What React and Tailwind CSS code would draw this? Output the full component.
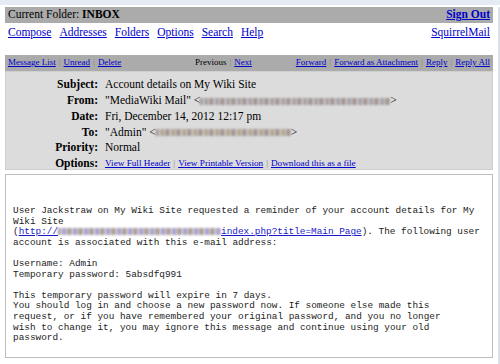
import React from 'react';

const serif = { fontFamily: '"Liberation Serif", "Times New Roman", serif' };

const Sep = () => <span className="text-[#8a8a8a] px-[3px]">|</span>;

const A = ({ children, className = '' }) => (
  <a href="#" className={`text-[#0000cc] underline ${className}`}>{children}</a>
);

// blurred stand-in for redacted addresses
const Blur = ({ w, tint = '#6f6f8f' }) => (
  <span
    className="inline-block h-[7px] align-middle blur-[0.8px] opacity-75"
    style={{
      width: w,
      background: `repeating-linear-gradient(90deg,#6a5a5a 0px,#a89a9a 2px,#d0c6bb 4px,${tint} 6px,#c4b8a8 8px,#8d7f7f 11px)`,
    }}
  />
);

const HeaderRow = ({ label, children, small }) => (
  <div className="flex items-center h-[15.8px]">
    <div className="w-[99px] text-right font-bold pr-[7px] text-[11.5px] leading-none">{label}</div>
    <div className={small ? 'text-[9.2px] leading-none' : 'text-[11.5px] leading-none'}>{children}</div>
  </div>
);

export default function App() {
  return (
    <div className="w-[500px] h-[364px] bg-white overflow-hidden text-black" style={serif}>
      <div className="h-[5px] bg-[#e4ebf2]" />
      <div className="pl-[5px] pr-[5px] border-r-[2px] border-[#d9e1ea] h-[359px]">
        <div className="mt-[2px] h-[16px] bg-[#ababab] flex items-center justify-between px-[3px] text-[11.5px]">
          <span>Current Folder: <b>INBOX</b></span>
          <A className="font-bold">Sign Out</A>
        </div>
        <div className="h-[20px] flex items-center justify-between px-[3px] text-[11.5px]">
          <div className="flex gap-[8px]">
            <A>Compose</A>
            <A>Addresses</A>
            <A>Folders</A>
            <A>Options</A>
            <A>Search</A>
            <A>Help</A>
          </div>
          <A>SquirrelMail</A>
        </div>

        <div className="mt-[12px] h-[16px] bg-[#ababab] flex items-center px-[3px] text-[9px]">
          <div className="w-[187px]">
            <A>Message List</A><Sep /><A>Unread</A><Sep /><A>Delete</A>
          </div>
          <div className="w-[80px]">
            <span>Previous</span><Sep /><A>Next</A>
          </div>
          <div className="flex-1 text-right whitespace-nowrap">
            <A>Forward</A><Sep /><A>Forward as Attachment</A><Sep /><A>Reply</A><Sep /><A>Reply All</A>
          </div>
        </div>

        <div className="bg-[#dcdcdc] border border-[#cfcfcf] pt-[5px] h-[99px]">
          <HeaderRow label="Subject:">Account details on My Wiki Site</HeaderRow>
          <HeaderRow label="From:">
            "MediaWiki Mail" &lt;<Blur w={190} />&gt;
          </HeaderRow>
          <HeaderRow label="Date:">Fri, December 14, 2012 12:17 pm</HeaderRow>
          <HeaderRow label="To:">
            "Admin" &lt;<Blur w={135} tint="#8a7a5a" />&gt;
          </HeaderRow>
          <HeaderRow label="Priority:">Normal</HeaderRow>
          <HeaderRow label="Options:" small>
            <A>View Full Header</A><Sep /><A>View Printable Version</A><Sep /><A>Download this as a file</A>
          </HeaderRow>
        </div>

        <div className="mt-[4px] border border-[#bdbdbd] bg-white h-[184px] pl-[7px] pt-[31px]">
          <pre
            className="text-[9.4px] leading-[10.6px] text-[#222]"
            style={{ fontFamily: '"Liberation Mono", "Courier New", monospace' }}
          >
{`User Jackstraw on My Wiki Site requested a reminder of your account details for My
Wiki Site
(`}<A className="text-[#1a1acc]">http://<Blur w={163} tint="#5a5ae0" />index.php?title=Main Page</A>{`). The following user
account is associated with this e-mail address:

Username: Admin
Temporary password: 5absdfq991

This temporary password will expire in 7 days.
You should log in and choose a new password now. If someone else made this
request, or if you have remembered your original password, and you no longer
wish to change it, you may ignore this message and continue using your old
password.`}
          </pre>
        </div>
      </div>
    </div>
  );
}
